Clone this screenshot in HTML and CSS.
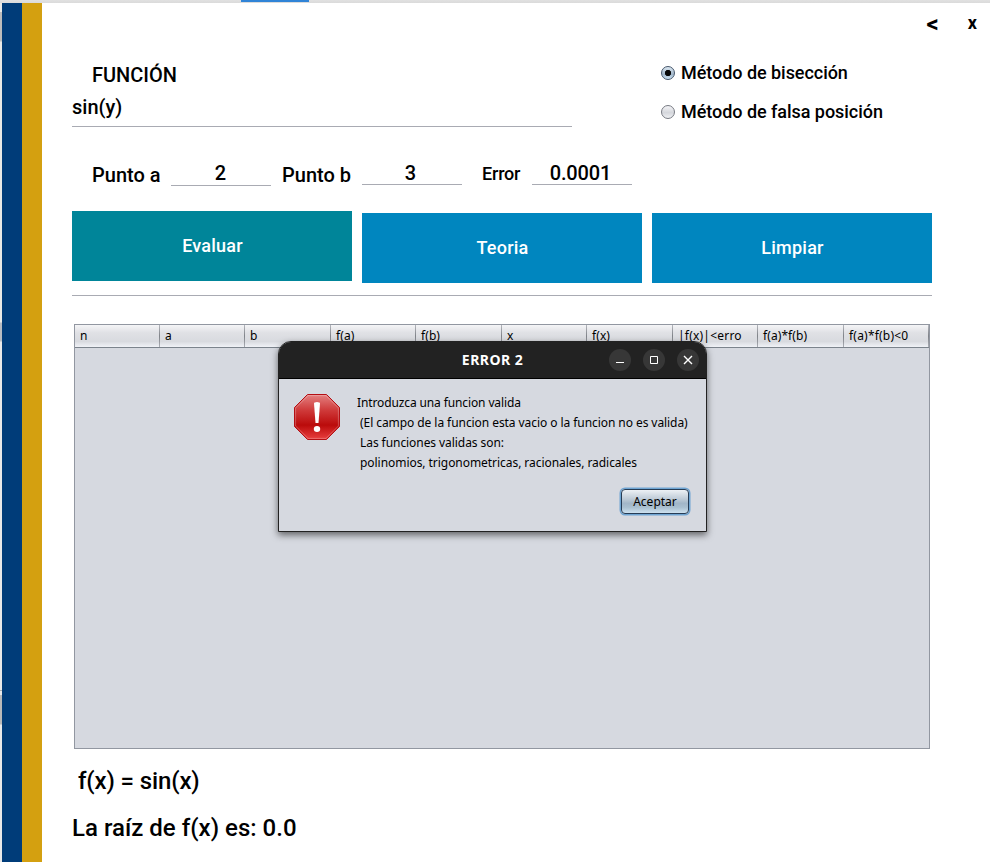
FILE: index.html
```html
<!DOCTYPE html>
<html lang="es">
<head>
<meta charset="utf-8">
<title>Métodos numéricos</title>
<link rel="stylesheet" href="styles.css">
</head>
<body>
<div class="desktop-top"><i class="tab-accent"></i></div>
<div class="window">
  <div class="edge"></div>
  <div class="stripe blue"></div>
  <div class="stripe gold"></div>
  <main>
    <header class="controls"><span class="back">&lt;</span><span class="quit">x</span></header>
    <section class="function-row">
      <div class="function">
        <label class="function-label"><span>FUNCIÓN</span></label>
        <div class="function-input"><span>sin(y)</span></div>
      </div>
      <div class="methods">
        <div class="method"><i class="radio selected"></i><span>Método de bisección</span></div>
        <div class="method"><i class="radio"></i><span>Método de falsa posición</span></div>
      </div>
    </section>
    <section class="params">
      <label class="pa">Punto a</label><div class="field fa">2</div>
      <label class="pb">Punto b</label><div class="field">3</div>
      <label class="pe">Error</label><div class="field fe">0.0001</div>
    </section>
    <section class="buttons">
      <div class="button active"><span>Evaluar</span></div>
      <div class="button"><span>Teoria</span></div>
      <div class="button"><span>Limpiar</span></div>
    </section>
    <div class="rule"></div>
    <section class="table">
      <div class="thead">
        <div>n</div><div>a</div><div>b</div><div>f(a)</div><div>f(b)</div><div>x</div><div>f(x)</div><div class="wide">|f(x)|&lt;erro</div><div>f(a)*f(b)</div><div class="wide">f(a)*f(b)&lt;0</div>
      </div>
    </section>
    <p class="result fx">f(x) = sin(x)</p>
    <p class="result root">La raíz de f(x) es: 0.0</p>
  </main>
</div>
<div class="dialog">
  <div class="titlebar">
    <span class="title">ERROR 2</span>
    <div class="window-buttons">
      <svg viewBox="0 0 22 22"><circle cx="11" cy="11" r="11"/><path d="M7 13.5h8"/></svg>
      <svg viewBox="0 0 22 22"><circle cx="11" cy="11" r="11"/><path d="M7.5 7.500h7v7h-7z"/></svg>
      <svg viewBox="0 0 22 22"><circle cx="11" cy="11" r="11"/><path d="M7 7l8 8M15 7l-8 8" stroke-width="1.4"/></svg>
    </div>
  </div>
  <div class="dialog-body">
    <svg class="stop" viewBox="0 0 46 46">
      <defs><linearGradient id="red" x1="0" y1="0" x2="0" y2="1"><stop offset="0" stop-color="#e48080"/><stop offset=".35" stop-color="#cf3a3a"/><stop offset=".68" stop-color="#bb0b0b"/><stop offset="1" stop-color="#e94040"/></linearGradient></defs>
      <path d="M13.500.5h19l13 13v19l-13 13h-19l-13-13v-19z" fill="url(#red)" stroke="#b40f14"/>
      <path d="M14 1.600h18l12.400 12.400v18l-12.400 12.400h-18l-12.400-12.400v-18z" fill="none" stroke="#fff" stroke-opacity=".25"/>
      <path d="M20 9.500Q20 8 23 8t3 1.500L24.500 29h-3z" fill="#fff"/><ellipse cx="23" cy="35" rx="3.200" ry="3" fill="#fff"/>
    </svg>
    <div class="message">
      <div class="l1">Introduzca una funcion valida</div>
      <div>(El campo de la funcion esta vacio o la funcion no es valida)</div>
      <div>Las funciones validas son:</div>
      <div class="l4">polinomios, trigonometricas, racionales, radicales</div>
    </div>
  </div>
  <div class="accept"><span>Aceptar</span></div>
</div>
</body>
</html>
```
FILE: styles.css
```css
* { box-sizing: border-box; }
body { margin: 0; width: 990px; height: 862px; overflow: hidden; background: #fff; color: #000; font-family: Roboto, sans-serif; font-weight: 500; white-space: nowrap; }
.desktop-top { height: 3px; background: linear-gradient(#e1e1e1, #dadada); padding-left: 241px; }
.tab-accent { display: block; width: 68px; height: 2px; background: #3084d7; }
.window { display: flex; height: 859px; }
.edge { width: 2px; background: linear-gradient(#e9e9e6 9px, #bcbcbc 9px 38px, #e9e9e6 39px 319px, #b8bcc2 320px 338px, #e9e9e9 339px 687px, #aaa 687px 688px, #e9e9e9 688px 692px, #b9b9b9 692px 721px, #e9e9e9 722px); }
.stripe { width: 20px; }
.blue { background: #003c79; }
.gold { background: #d4a010; }
main { flex: 1; padding-left: 30px; }
.controls { height: 40px; display: flex; justify-content: flex-end; align-items: center; gap: 29px; padding-right: 13px; font-weight: 700; }
.back { font-size: 24px; line-height: 38px; padding-top: 2px; }
.quit { font-size: 18px; line-height: 40px; }
.function-row { display: flex; height: 84px; }
.function { width: 588px; padding-top: 18px; }
.function-label { display: block; height: 28px; line-height: 28px; padding-left: 20px; font-size: 20px; }
.function-input { width: 500px; height: 38px; line-height: 36px; border-bottom: 1px solid #a9abb3; font-size: 20px; }
.methods { padding-top: 10px; }
.method { display: flex; align-items: center; height: 39px; gap: 6px; font-size: 18px; letter-spacing: -.045px; }
.radio { width: 14px; height: 14px; margin: 1px 0 0 1px; border: 1px solid #777a82; border-radius: 50%; background: linear-gradient(#f4f4f7, #d5d7dc 55%, #eef0f3); }
.selected { border-color: #45566b; background: radial-gradient(circle at 50% 50%, #080808 2.800px, transparent 3.500px), linear-gradient(#dce8f2, #a1b6c9 60%, #cde3f4); }
.params { display: flex; height: 84px; padding-left: 20px; font-size: 20px; line-height: 24px; padding-top: 34px; }
.params label { height: 28px; padding-top: 2px; }
.pa { width: 79px; }
.pb { width: 80px; margin-left: 11px; }
.pe { width: 50px; margin-left: 20px; font-size: 18px; line-height: 22px; letter-spacing: -.2px; }
.field { width: 100px; height: 24px; border-bottom: 1px solid #a9abb3; text-align: center; padding-right: 3px; }
.fa { height: 25px; padding-right: 1px; }
.fe { letter-spacing: -.15px; }
.buttons { display: flex; gap: 10px; align-items: flex-end; height: 72px; }
.button { width: 280px; height: 70px; display: flex; align-items: center; justify-content: center; padding: 0 0 2px 1px; background: #0086bf; color: #fff; font-size: 18px; letter-spacing: .22px; }
.active { background: #008599; align-self: flex-start; }
.rule { height: 1px; width: 860px; background: #a9abb3; margin-top: 12px; }
.table { margin: 28px 0 0 2px; width: 856px; height: 425px; border: 1px solid #9297a1; background: #d6d9e0; }
.thead { display: grid; grid-template-columns: 85px 85px 86px 85px 86px 85px 86px 85px 86px 85px; height: 23px; border-bottom: 1px solid #7b838c; background: linear-gradient(#f5f5f7, #e0e1e5 35%, #d8dadf 75%, #f0f2f7); font: 12px/21px "Noto Sans", sans-serif; }
.thead div { padding-left: 5px; border-right: 1px solid; border-image: linear-gradient(#b9bbc1, #808389 50%, #adb0b7) 1; overflow: hidden; letter-spacing: .08px; }
.thead .wide { letter-spacing: .21px; }
.result { margin: 0; font-size: 24px; line-height: 32px; }
.fx { margin-top: 16px; padding-left: 6px; letter-spacing: -.13px; }
.root { margin-top: 15px; letter-spacing: .02px; }
.dialog { position: absolute; left: 278px; top: 341px; width: 429px; height: 191px; border: 1px solid #222; border-radius: 13px 13px 0 0; background: #d6d9e0; box-shadow: 0 3px 7px rgba(0,0,0,.55); font: 12px/20px "Noto Sans", sans-serif; }
.titlebar { display: grid; grid-template-columns: 1fr auto 1fr; align-items: center; height: 37px; border-bottom: 1px solid #000; background: #222; border-radius: 12px 12px 0 0; color: #fff; }
.title { grid-column: 2; font-size: 14px; font-weight: 700; letter-spacing: .45px; }
.window-buttons { display: flex; justify-content: flex-end; gap: 12px; padding-right: 7px; }
.window-buttons svg { width: 22px; height: 22px; fill: none; stroke: #fff; }
.window-buttons circle { fill: #373737; stroke: none; }
.dialog-body { display: flex; padding: 14px 0 0 15px; }
.stop { width: 46px; height: 46px; margin-top: 1px; }
.message { margin-left: 17px; letter-spacing: -.066px; }
.message div { padding-left: 3px; }
.message .l1 { padding-left: 0; letter-spacing: -.12px; }
.message .l4 { letter-spacing: -.05px; }
.accept { width: 68px; height: 25px; margin: 16px 0 0 342px; border: 1px solid #263c55; border-radius: 4px; background: linear-gradient(#edf1f5, #bdcad6 40%, #a2b6c8 58%, #a9bfd0 75%, #cde1ef); box-shadow: 0 0 0 1.500px #6ea4d2; text-align: center; line-height: 23px; }
```
